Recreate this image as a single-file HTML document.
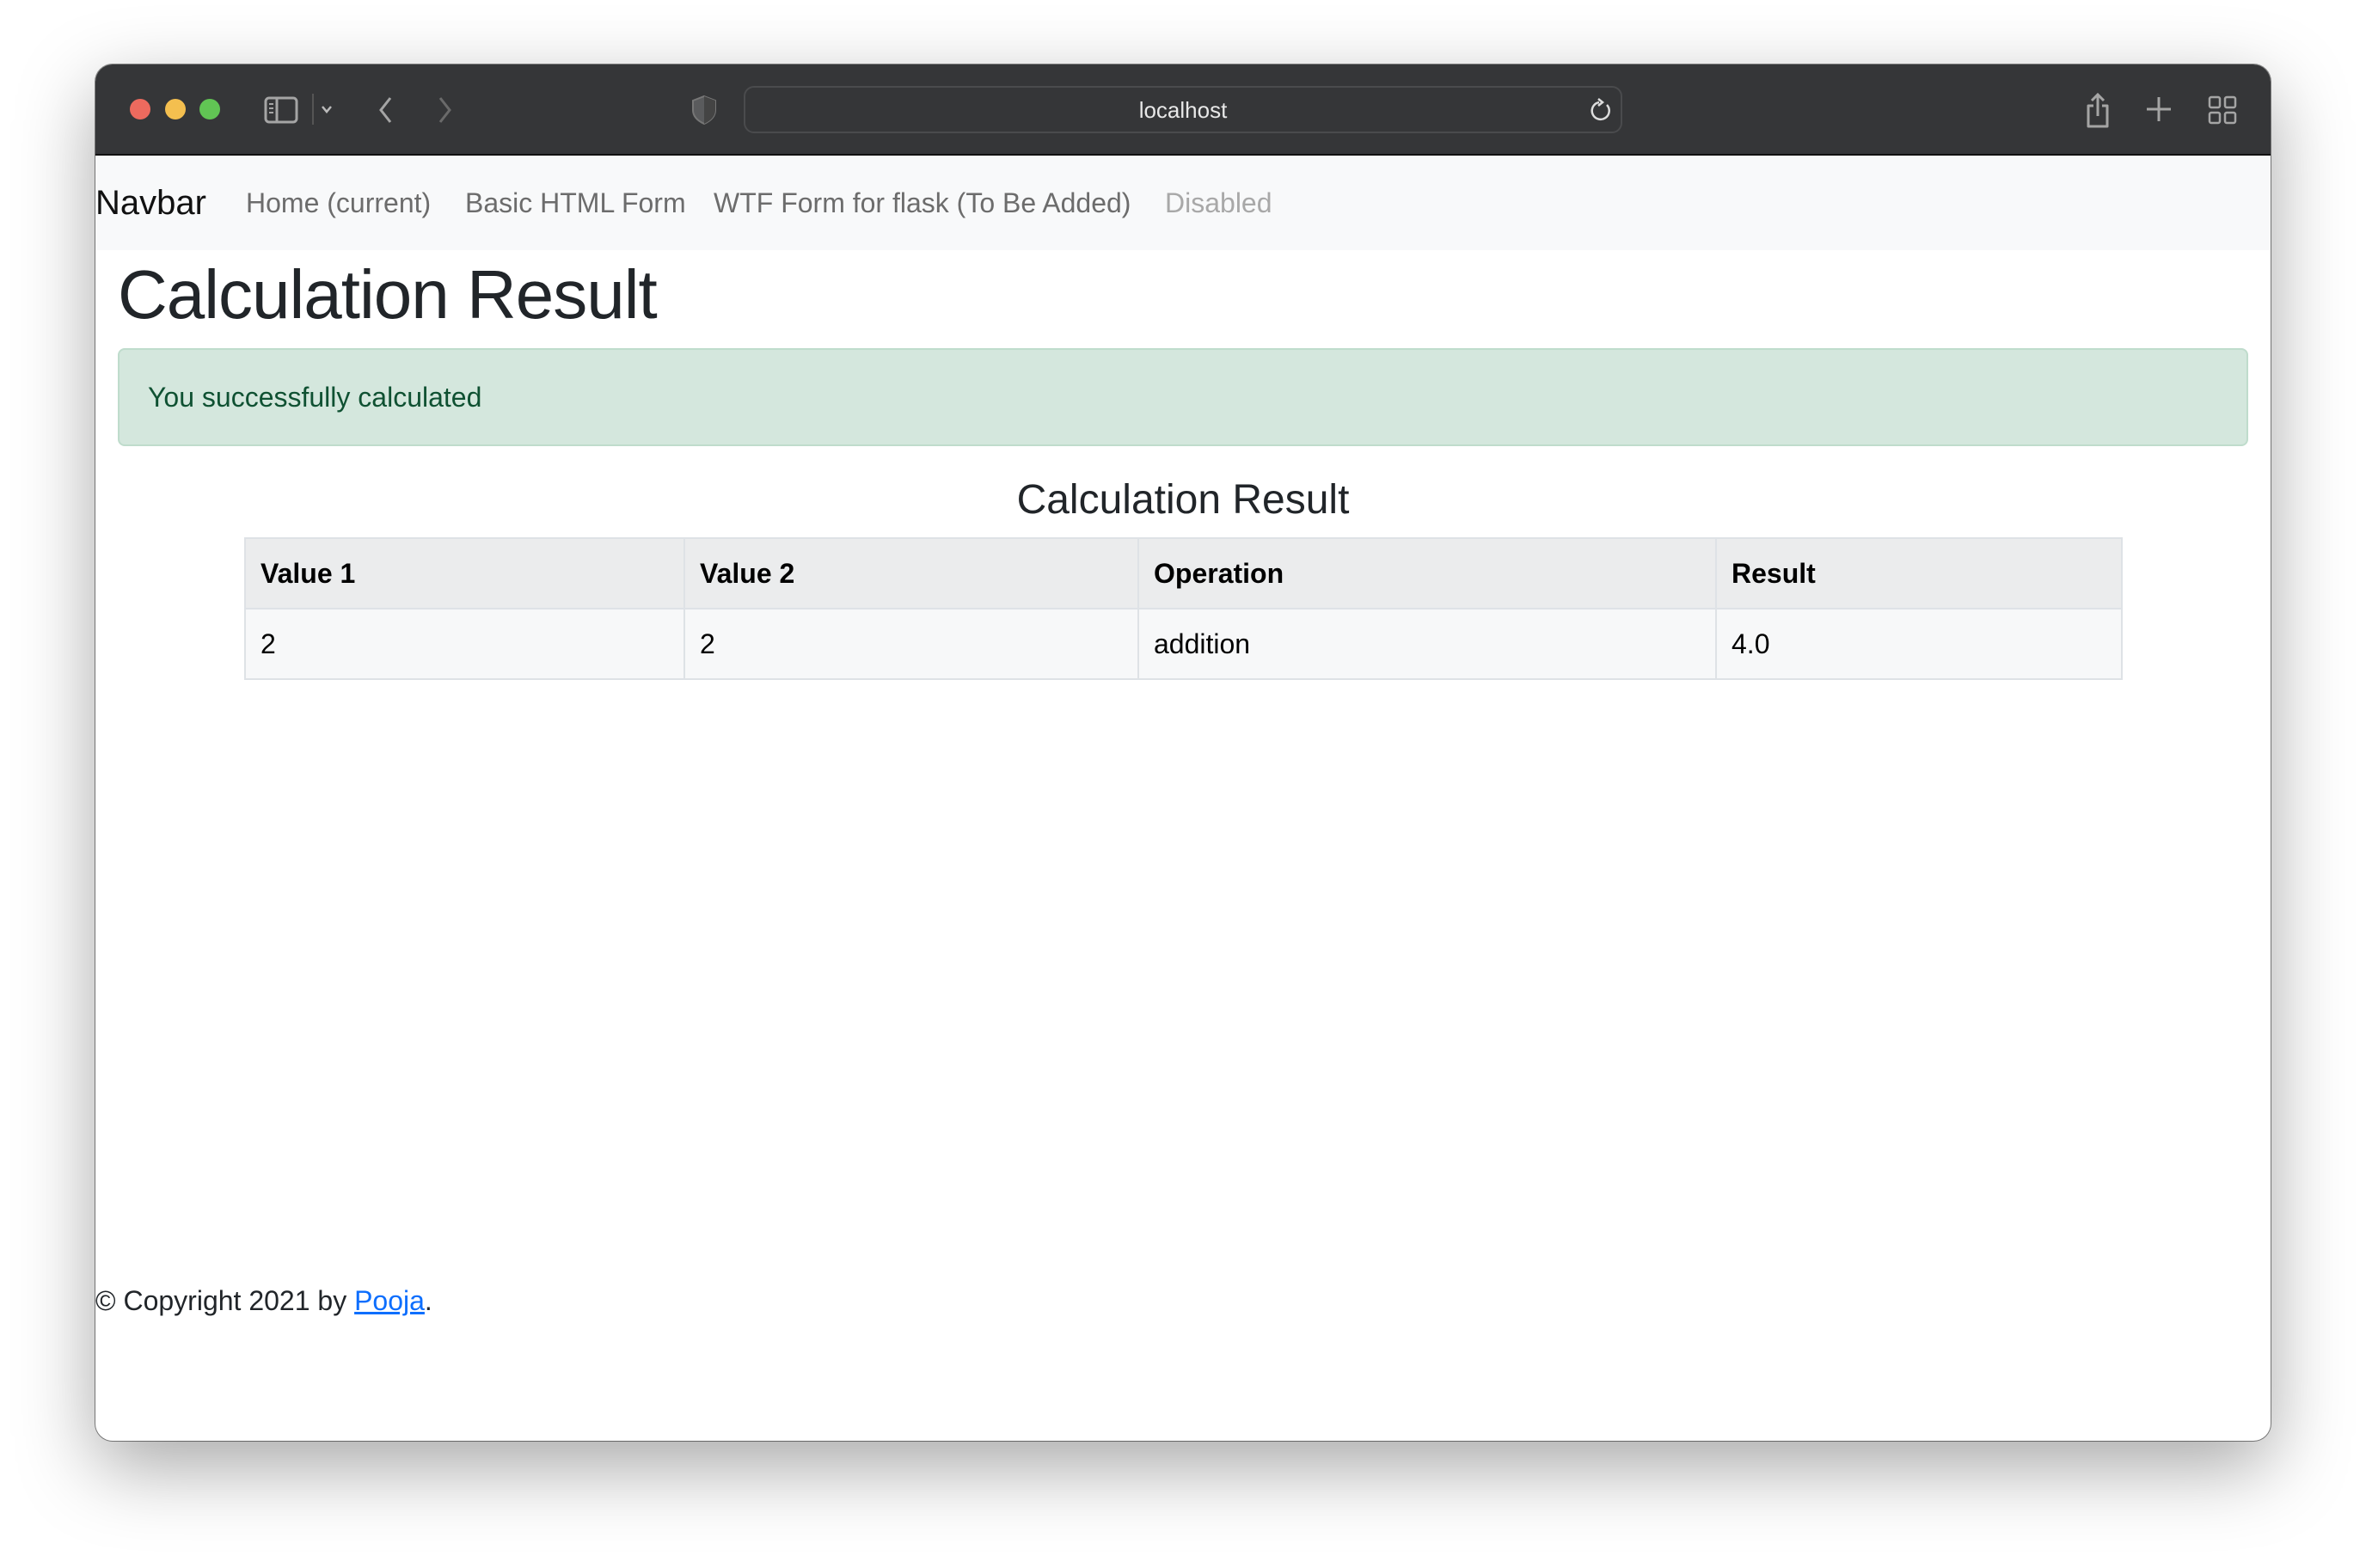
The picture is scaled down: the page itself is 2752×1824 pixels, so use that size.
<!DOCTYPE html>
<html><head><meta charset="utf-8"><style>
*{margin:0;padding:0;box-sizing:border-box}
html,body{width:2752px;height:1824px;background:#fff;overflow:hidden;font-family:"Liberation Sans",Arial,sans-serif}
.win{position:absolute;left:111px;top:75px;width:2530px;height:1601px;border-radius:20px;background:#fff;box-shadow:0 30px 90px rgba(0,0,0,.35),0 0 0 1px rgba(0,0,0,.45);overflow:hidden}
.tb{position:absolute;left:0;top:0;width:100%;height:106px;background:#353638;border-bottom:2px solid #111}
.dot{position:absolute;top:115px;width:24px;height:24px;border-radius:50%}
.url{position:absolute;left:754px;top:25px;width:1022px;height:55px;border:2px solid #4a4b4d;border-radius:12px;color:#e8e8e8;font-size:26px;text-align:center;line-height:53px}
svg{position:absolute}
.nav{position:absolute;top:106px;left:0;width:100%;height:110px;background:#f8f9fa}
.nav span{position:absolute;top:37px;font-size:32px;color:#6c6c6c;white-space:nowrap}
h1{position:absolute;left:26px;top:222px;font-size:80px;font-weight:500;color:#212529;letter-spacing:-1px}
.alert{position:absolute;left:26px;top:330px;width:2478px;height:114px;background:#d4e7dd;border:2px solid #bfdccc;border-radius:8px;color:#0f5132;font-size:32px;padding:37px 0 0 33px}
h4{position:absolute;left:0;width:2530px;top:479px;text-align:center;font-size:48px;font-weight:500;color:#212529}
table{position:absolute;left:173px;top:550px;width:2185px;border-collapse:collapse;font-size:32px;color:#000}
td,th{border:2px solid #dee2e6;text-align:left;padding:0 17px;height:82px}
th{background:#ebeced;font-weight:bold}
td{background:#f7f8f9}
.foot{position:absolute;left:0;top:1420px;font-size:32px;color:#212529}
.foot a{color:#0d6efd;text-decoration:underline}
</style></head><body>
<div class="win">
<div class="tb">
<div class="dot" style="left:40px;top:40px;background:#ed6a5e"></div>
<div class="dot" style="left:81px;top:40px;background:#f4bf4f"></div>
<div class="dot" style="left:121px;top:40px;background:#61c554"></div>
<svg style="left:196px;top:37px" width="40" height="32" viewBox="0 0 40 32"><rect x="2" y="2" width="36" height="28" rx="4" fill="none" stroke="#a5a5a5" stroke-width="3"/><line x1="15" y1="2" x2="15" y2="30" stroke="#a5a5a5" stroke-width="3"/><line x1="6" y1="9" x2="11" y2="9" stroke="#a5a5a5" stroke-width="2"/><line x1="6" y1="14" x2="11" y2="14" stroke="#a5a5a5" stroke-width="2"/><line x1="6" y1="19" x2="11" y2="19" stroke="#a5a5a5" stroke-width="2"/></svg>
<div style="position:absolute;left:252px;top:34px;width:2px;height:36px;background:#555"></div>
<svg style="left:261px;top:46px" width="16" height="12"><path d="M3 3 L8 9 L13 3" fill="none" stroke="#bbb" stroke-width="2.5"/></svg>
<svg style="left:326px;top:36px" width="22" height="34"><path d="M17 3 L6 17 L17 31" fill="none" stroke="#a5a5a5" stroke-width="3"/></svg>
<svg style="left:396px;top:36px" width="22" height="34"><path d="M5 3 L16 17 L5 31" fill="none" stroke="#6a6a6a" stroke-width="3"/></svg>
<svg style="left:693px;top:35px" width="30" height="36" viewBox="0 0 30 36"><path d="M15 2 L28 7 L28 18 Q28 28 15 34 Q2 28 2 18 L2 7 Z" fill="#5a5b5d" stroke="#777" stroke-width="2"/><path d="M15 2 L28 7 L28 18 Q28 28 15 34 Z" fill="#444"/></svg>
<div class="url">localhost</div>
<svg style="left:1738px;top:38px" width="28" height="32" viewBox="0 0 28 32"><path d="M20 9 A10 10 0 1 1 11 6" fill="none" stroke="#ddd" stroke-width="2.5"/><path d="M10 2 L15 6 L10 10" fill="none" stroke="#ddd" stroke-width="2.5"/></svg>
<svg style="left:2313px;top:32px" width="32" height="44" viewBox="0 0 32 44"><path d="M11 16 H5 V40 H27 V16 H21" fill="none" stroke="#a5a5a5" stroke-width="3" stroke-linejoin="round"/><path d="M16 28 V3 M9 10 L16 3 L23 10" fill="none" stroke="#a5a5a5" stroke-width="3"/></svg>
<svg style="left:2384px;top:36px" width="32" height="32"><path d="M16 2 V30 M2 16 H30" stroke="#a5a5a5" stroke-width="3"/></svg>
<svg style="left:2457px;top:36px" width="34" height="34" viewBox="0 0 34 34"><rect x="2" y="2" width="12" height="12" rx="2" fill="none" stroke="#a5a5a5" stroke-width="2.5"/><rect x="20" y="2" width="12" height="12" rx="2" fill="none" stroke="#a5a5a5" stroke-width="2.5"/><rect x="2" y="20" width="12" height="12" rx="2" fill="none" stroke="#a5a5a5" stroke-width="2.5"/><rect x="20" y="20" width="12" height="12" rx="2" fill="none" stroke="#a5a5a5" stroke-width="2.5"/></svg>
</div>
<div class="nav">
<span style="left:0;top:33px;font-size:40px;color:#111">Navbar</span>
<span style="left:175px">Home (current)</span>
<span style="left:430px">Basic HTML Form</span>
<span style="left:719px">WTF Form for flask (To Be Added)</span>
<span style="left:1244px;color:#a8a8a8">Disabled</span>
</div>
<h1>Calculation Result</h1>
<div class="alert">You successfully calculated</div>
<h4>Calculation Result</h4>
<table>
<tr><th style="width:511px">Value 1</th><th style="width:528px">Value 2</th><th style="width:672px">Operation</th><th>Result</th></tr>
<tr><td>2</td><td>2</td><td>addition</td><td>4.0</td></tr>
</table>
<div class="foot">© Copyright 2021 by <a>Pooja</a>.</div>
</div>
</body></html>
